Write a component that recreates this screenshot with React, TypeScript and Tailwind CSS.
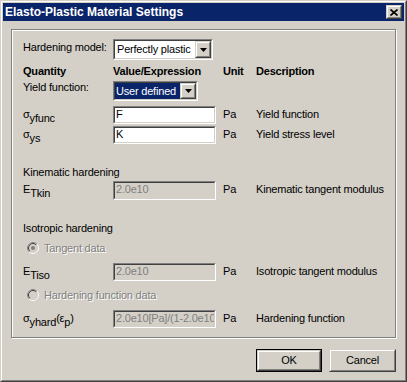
import type { ReactNode } from 'react';

const font = "font-['Liberation_Sans',Arial,sans-serif]";

function Sunken({ className = '', disabled = false, children }: { className?: string; disabled?: boolean; children?: ReactNode }) {
  return (
    <div className={`border border-t-[#808080] border-l-[#808080] border-r-white border-b-white ${className}`}>
      <div
        className={`flex h-full overflow-hidden whitespace-nowrap border border-t-[#404040] border-l-[#404040] border-r-[#d4d0c8] border-b-[#d4d0c8] ${
          disabled ? 'bg-[#d4d0c8] text-[#808080]' : 'bg-white text-black'
        }`}
      >
        {children}
      </div>
    </div>
  );
}

function Raised({ className = '', def = false, children }: { className?: string; def?: boolean; children?: ReactNode }) {
  return (
    <div className={`${def ? 'border border-black' : ''} ${className}`}>
      <div className="h-full border border-t-[#d4d0c8] border-l-[#d4d0c8] border-r-[#404040] border-b-[#404040] bg-[#d4d0c8]">
        <div className="flex h-full items-center justify-center border border-t-white border-l-white border-r-[#808080] border-b-[#808080]">
          {children}
        </div>
      </div>
    </div>
  );
}

function Combo({ className = '', children }: { className?: string; children: ReactNode }) {
  return (
    <Sunken className={className}>
      <div className="flex min-w-0 flex-1 items-center">{children}</div>
      <Raised className="h-full w-[16px]">
        <svg width="7" height="4" viewBox="0 0 7 4">
          <path d="M0 0h7L3.5 4z" fill="#000" />
        </svg>
      </Raised>
    </Sunken>
  );
}

function Radio({ checked = false }: { checked?: boolean }) {
  return (
    <svg width="12" height="12" viewBox="0 0 12 12">
      <circle cx="6" cy="6" r="5.5" fill="#d4d0c8" stroke="#ffffff" />
      <circle cx="6" cy="6" r="4.5" fill="#d4d0c8" stroke="#d4d0c8" />
      <path d="M2.1 9.9A5.5 5.5 0 0 1 9.9 2.1" fill="none" stroke="#808080" />
      <path d="M2.8 9.2A4.5 4.5 0 0 1 9.2 2.8" fill="none" stroke="#404040" />
      {checked && <circle cx="6" cy="6" r="2" fill="#808080" />}
    </svg>
  );
}

// σ_yfunc style label: main glyph plus dropped subscript
function Sub({ children }: { children: ReactNode }) {
  return <span className="relative top-[4px]">{children}</span>;
}

function InputRow({
  className,
  label,
  value,
  desc,
  disabled = false,
}: {
  className: string;
  label: ReactNode;
  value: string;
  desc: string;
  disabled?: boolean;
}) {
  return (
    <div className={`flex ${className}`}>
      <div className="w-[90px] whitespace-nowrap pt-[2px]">{label}</div>
      <Sunken className="w-[103px]" disabled={disabled}>
        <span className="pl-[1px]">{value}</span>
      </Sunken>
      <div className="ml-[7px] w-[33px] pt-[2px]">Pa</div>
      <div className="pt-[2px]">{desc}</div>
    </div>
  );
}

export default function App() {
  return (
    <div
      className={`h-[382px] w-[407px] bg-[#d4d0c8] text-[11px] leading-[13px] tracking-[-0.2px] text-black ${font} border border-t-[#d4d0c8] border-l-[#d4d0c8] border-r-[#404040] border-b-[#404040]`}
    >
      <div className="flex h-full flex-col border border-t-white border-l-white border-r-[#808080] border-b-[#808080] p-[1px]">
        {/* Title bar */}
        <div className="flex h-[18px] items-center justify-between bg-[#0a246a] px-[2px]">
          <span className="text-[12px] font-bold tracking-normal text-white">Elasto-Plastic Material Settings</span>
          <Raised className="h-[14px] w-[16px]">
            <svg width="8" height="7" viewBox="0 0 8 7">
              <path d="M0.5 0.5L7.5 6.5M7.5 0.5L0.5 6.5" stroke="#000" strokeWidth="1.6" />
            </svg>
          </Raised>
        </div>

        <div className="flex-1 px-[8px] pt-[8px]">
          {/* Settings group */}
          <div className="flex flex-col border border-[#808080] pb-[9px] pl-[11px] shadow-[1px_1px_0_#ffffff,inset_1px_1px_0_#ffffff]">
            <div className="mt-[9px] flex h-[21px]">
              <div className="w-[90px] pt-[2px]">Hardening model:</div>
              <Combo className="w-[100px]">
                <span className="pl-[2px]">Perfectly plastic</span>
              </Combo>
            </div>

            <div className="mt-[2px] flex h-[18px] items-center font-bold">
              <div className="w-[90px]">Quantity</div>
              <div className="w-[110px]">Value/Expression</div>
              <div className="w-[33px]">Unit</div>
              <div>Description</div>
            </div>

            <div className="mt-[1px] flex h-[20px]">
              <div className="w-[90px]">Yield function:</div>
              <Combo className="w-[85px]">
                <div className="flex h-full flex-1 items-center bg-[#0a246a] pl-[1px] text-white">User defined</div>
              </Combo>
            </div>

            <InputRow
              className="mt-[5px] h-[18px]"
              label={<>σ<Sub>yfunc</Sub></>}
              value="F"
              desc="Yield function"
            />
            <InputRow
              className="mt-[2px] h-[18px]"
              label={<>σ<Sub>ys</Sub></>}
              value="K"
              desc="Yield stress level"
            />

            <div className="mt-[21px] h-[14px] leading-[14px]">Kinematic hardening</div>
            <InputRow
              className="mt-[2px] h-[19px]"
              label={<>E<Sub>Tkin</Sub></>}
              value="2.0e10"
              desc="Kinematic tangent modulus"
              disabled
            />

            <div className="mt-[21px] h-[14px] leading-[14px]">Isotropic hardening</div>
            <div className="mt-[6px] flex h-[14px] items-center pl-[4px]">
              <Radio checked />
              <span className="ml-[5px] text-[#808080] [text-shadow:1px_1px_0_#ffffff]">Tangent data</span>
            </div>
            <InputRow
              className="mt-[8px] h-[18px]"
              label={<>E<Sub>Tiso</Sub></>}
              value="2.0e10"
              desc="Isotropic tangent modulus"
              disabled
            />
            <div className="mt-[7px] flex h-[14px] items-center pl-[4px]">
              <Radio />
              <span className="ml-[5px] text-[#808080] [text-shadow:1px_1px_0_#ffffff]">Hardening function data</span>
            </div>
            <InputRow
              className="mt-[8px] h-[18px]"
              label={
                <>
                  σ<Sub>yhard</Sub>(ε<Sub>p</Sub>)
                </>
              }
              value="2.0e10[Pa]/(1-2.0e10[Pa]/K)"
              desc="Hardening function"
              disabled
            />
          </div>

          {/* Dialog buttons */}
          <div className="mt-[11px] flex justify-end gap-[7px]">
            <Raised def className="h-[23px] w-[66px]">
              OK
            </Raised>
            <Raised className="h-[23px] w-[67px]">Cancel</Raised>
          </div>
        </div>
      </div>
    </div>
  );
}
